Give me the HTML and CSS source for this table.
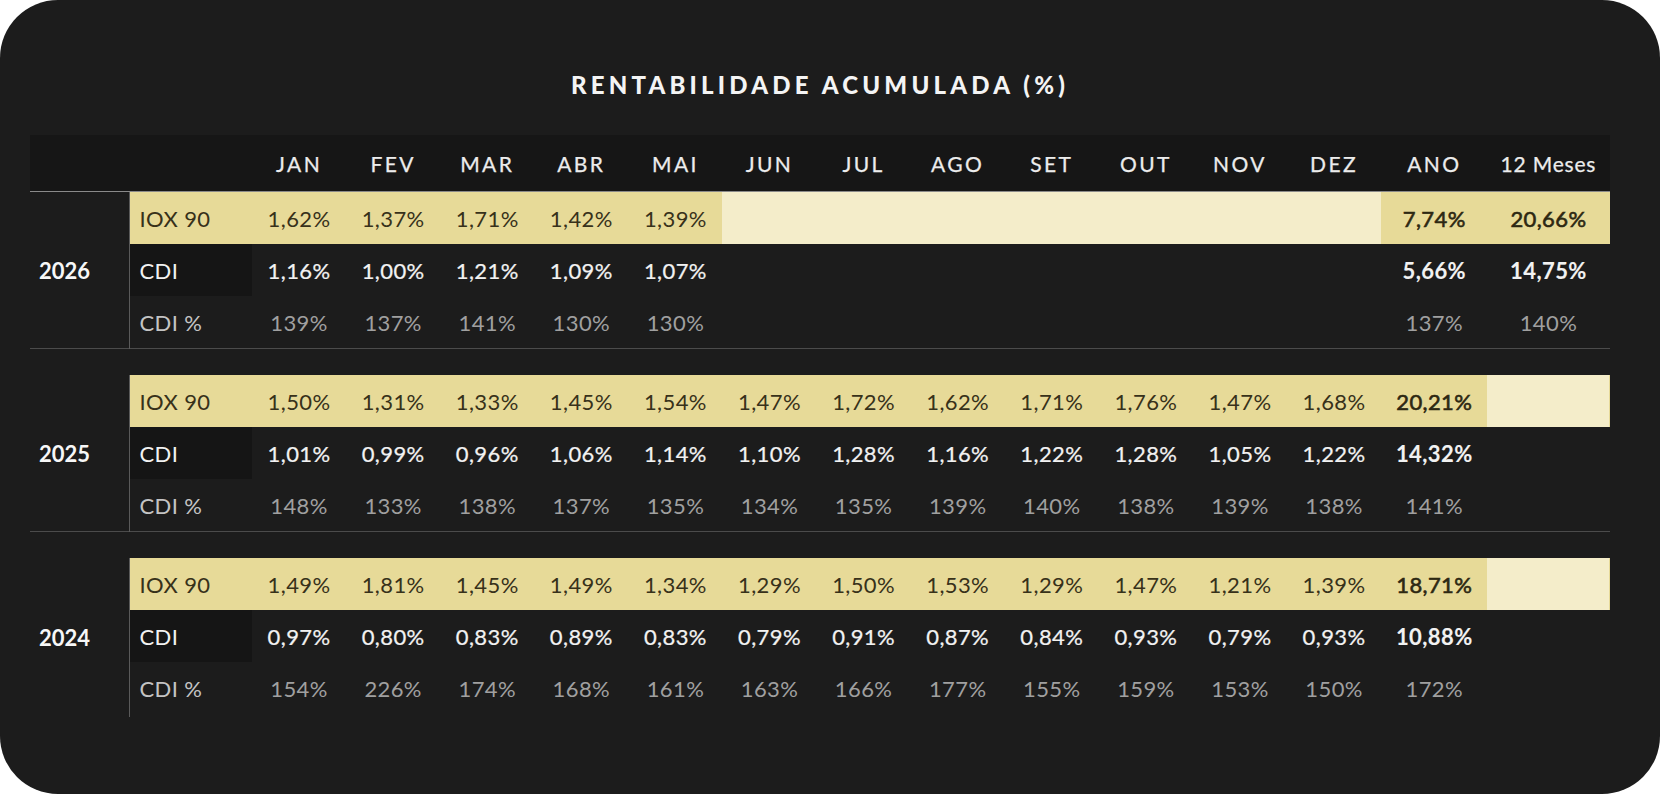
FILE: index.html
```html
<!DOCTYPE html>
<html lang="pt-BR">
<head>
<meta charset="utf-8">
<title>Rentabilidade Acumulada</title>
<link rel="stylesheet" href="styles.css">
</head>
<body>
<div class="card">
  <h1 class="title">RENTABILIDADE ACUMULADA (%)</h1>
  <div class="table">
    <div class="head row">
      <div class="c year"></div>
      <div class="c label"></div>
      <div class="c">JAN</div><div class="c">FEV</div><div class="c">MAR</div><div class="c">ABR</div>
      <div class="c">MAI</div><div class="c">JUN</div><div class="c">JUL</div><div class="c">AGO</div>
      <div class="c">SET</div><div class="c">OUT</div><div class="c">NOV</div><div class="c">DEZ</div>
      <div class="c">ANO</div><div class="c">12 Meses</div>
    </div>

    <div class="group sep">
      <div class="year">2026</div>
      <div class="row iox">
        <div class="c label">IOX 90</div>
        <div class="c">1,62%</div><div class="c">1,37%</div><div class="c">1,71%</div><div class="c">1,42%</div>
        <div class="c">1,39%</div><div class="c empty"></div><div class="c empty"></div><div class="c empty"></div>
        <div class="c empty"></div><div class="c empty"></div><div class="c empty"></div><div class="c empty"></div>
        <div class="c tot">7,74%</div><div class="c tot">20,66%</div>
      </div>
      <div class="row cdi">
        <div class="c label">CDI</div>
        <div class="c">1,16%</div><div class="c">1,00%</div><div class="c">1,21%</div><div class="c">1,09%</div>
        <div class="c">1,07%</div><div class="c"></div><div class="c"></div><div class="c"></div>
        <div class="c"></div><div class="c"></div><div class="c"></div><div class="c"></div>
        <div class="c tot">5,66%</div><div class="c tot">14,75%</div>
      </div>
      <div class="row pct">
        <div class="c label">CDI %</div>
        <div class="c">139%</div><div class="c">137%</div><div class="c">141%</div><div class="c">130%</div>
        <div class="c">130%</div><div class="c"></div><div class="c"></div><div class="c"></div>
        <div class="c"></div><div class="c"></div><div class="c"></div><div class="c"></div>
        <div class="c">137%</div><div class="c">140%</div>
      </div>
    </div>

    <div class="group sep">
      <div class="year">2025</div>
      <div class="row iox">
        <div class="c label">IOX 90</div>
        <div class="c">1,50%</div><div class="c">1,31%</div><div class="c">1,33%</div><div class="c">1,45%</div>
        <div class="c">1,54%</div><div class="c">1,47%</div><div class="c">1,72%</div><div class="c">1,62%</div>
        <div class="c">1,71%</div><div class="c">1,76%</div><div class="c">1,47%</div><div class="c">1,68%</div>
        <div class="c tot">20,21%</div><div class="c empty"></div>
      </div>
      <div class="row cdi">
        <div class="c label">CDI</div>
        <div class="c">1,01%</div><div class="c">0,99%</div><div class="c">0,96%</div><div class="c">1,06%</div>
        <div class="c">1,14%</div><div class="c">1,10%</div><div class="c">1,28%</div><div class="c">1,16%</div>
        <div class="c">1,22%</div><div class="c">1,28%</div><div class="c">1,05%</div><div class="c">1,22%</div>
        <div class="c tot">14,32%</div><div class="c"></div>
      </div>
      <div class="row pct">
        <div class="c label">CDI %</div>
        <div class="c">148%</div><div class="c">133%</div><div class="c">138%</div><div class="c">137%</div>
        <div class="c">135%</div><div class="c">134%</div><div class="c">135%</div><div class="c">139%</div>
        <div class="c">140%</div><div class="c">138%</div><div class="c">139%</div><div class="c">138%</div>
        <div class="c">141%</div><div class="c"></div>
      </div>
    </div>

    <div class="group">
      <div class="year">2024</div>
      <div class="row iox">
        <div class="c label">IOX 90</div>
        <div class="c">1,49%</div><div class="c">1,81%</div><div class="c">1,45%</div><div class="c">1,49%</div>
        <div class="c">1,34%</div><div class="c">1,29%</div><div class="c">1,50%</div><div class="c">1,53%</div>
        <div class="c">1,29%</div><div class="c">1,47%</div><div class="c">1,21%</div><div class="c">1,39%</div>
        <div class="c tot">18,71%</div><div class="c empty"></div>
      </div>
      <div class="row cdi">
        <div class="c label">CDI</div>
        <div class="c">0,97%</div><div class="c">0,80%</div><div class="c">0,83%</div><div class="c">0,89%</div>
        <div class="c">0,83%</div><div class="c">0,79%</div><div class="c">0,91%</div><div class="c">0,87%</div>
        <div class="c">0,84%</div><div class="c">0,93%</div><div class="c">0,79%</div><div class="c">0,93%</div>
        <div class="c tot">10,88%</div><div class="c"></div>
      </div>
      <div class="row pct">
        <div class="c label">CDI %</div>
        <div class="c">154%</div><div class="c">226%</div><div class="c">174%</div><div class="c">168%</div>
        <div class="c">161%</div><div class="c">163%</div><div class="c">166%</div><div class="c">177%</div>
        <div class="c">155%</div><div class="c">159%</div><div class="c">153%</div><div class="c">150%</div>
        <div class="c">172%</div><div class="c"></div>
      </div>
    </div>
  </div>
</div>
</body>
</html>
```

FILE: styles.css
```css
html, body {
  margin: 0;
  padding: 0;
  background: #ffffff;
}

.card {
  width: 1660px;
  height: 794px;
  box-sizing: border-box;
  background: #1c1c1c;
  border-radius: 58px;
  padding: 70px 50px 0 30px;
  font-family: Lato, "Noto Sans", sans-serif;
  color: #f2f2f2;
  overflow: hidden;
}

.title {
  width: 1580px;
  margin: 0 0 35px 0;
  height: 30px;
  line-height: 30px;
  text-align: center;
  font-size: 24px;
  font-weight: 900;
  letter-spacing: 4.2px;
  color: #f4f4f4;
  white-space: nowrap;
}

.table {
  width: 1580px;
}

.row {
  display: grid;
  grid-template-columns: 122.5px repeat(12, 94.1px) 106.3px 122px;
  height: 52px;
}

.head.row {
  grid-template-columns: 99.5px 122.5px repeat(12, 94.1px) 106.3px 122px;
  height: 56px;
  background: #161616;
  border-bottom: 1px solid #8a8a8a;
}

.c {
  display: flex;
  align-items: center;
  justify-content: center;
  font-size: 22px;
  letter-spacing: 0.4px;
  white-space: nowrap;
}

.head .c {
  font-size: 21px;
  letter-spacing: 2.4px;
  color: #ececec;
  padding-top: 1px;
  -webkit-text-stroke: 0.25px currentColor;
}

.head .c:last-child {
  letter-spacing: 0.8px;
}

.group {
  display: grid;
  grid-template-columns: 99.5px 1fr;
  grid-template-rows: 52px 52px 52px;
}

.group.sep {
  border-bottom: 1px solid #4b4b4b;
  margin-bottom: 26px;
}

.group .year {
  grid-row: 1 / 4;
  grid-column: 1;
  display: flex;
  align-items: center;
  padding-left: 9px;
  font-size: 22px;
  font-weight: 700;
  color: #f7f7f7;
  border-right: 1px solid #5a5a5a;
  margin-bottom: -1px;
}

.group:last-child .year {
  margin-bottom: -3px;
}

.group .row {
  grid-column: 2;
}

.label {
  justify-content: flex-start;
  padding-left: 10px;
}

.iox {
  background: #e7da98;
  color: #37311a;
}

.iox .empty {
  background: #f4edca;
}

.iox .tot {
  color: #2d2812;
  -webkit-text-stroke: 0.6px currentColor;
}

.cdi {
  color: #f2f2f2;
  font-weight: 400;
  -webkit-text-stroke: 0.22px currentColor;
}

.cdi .label {
  background: #151515;
  -webkit-text-stroke: 0;
}

.cdi .tot {
  font-weight: 700;
  -webkit-text-stroke: 0.1px currentColor;
}

.pct {
  color: #a0a0a0;
  font-weight: 400;
}

.pct .label {
  color: #c4c4c4;
}
```
